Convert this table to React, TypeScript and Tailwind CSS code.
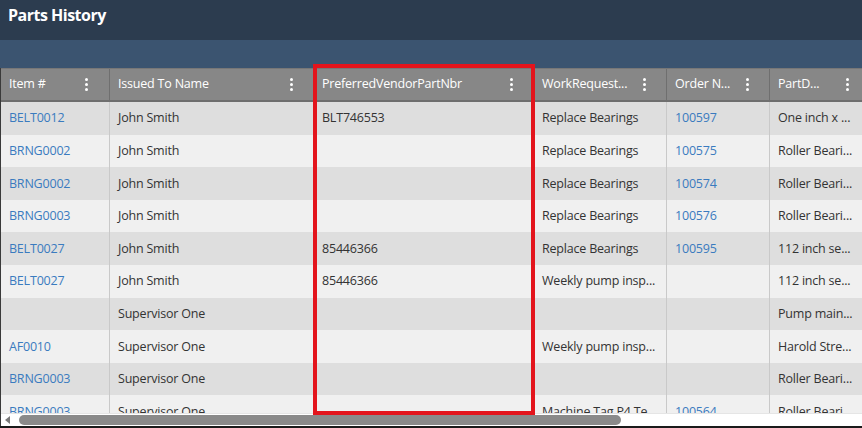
import React from 'react'

type Row = {
  item: string
  issuedTo: string
  vendorPart: string
  workRequest: string
  order: string
  partDesc: string
}

const rows: Row[] = [
  { item: 'BELT0012', issuedTo: 'John Smith', vendorPart: 'BLT746553', workRequest: 'Replace Bearings', order: '100597', partDesc: 'One inch x ...' },
  { item: 'BRNG0002', issuedTo: 'John Smith', vendorPart: '', workRequest: 'Replace Bearings', order: '100575', partDesc: 'Roller Beari...' },
  { item: 'BRNG0002', issuedTo: 'John Smith', vendorPart: '', workRequest: 'Replace Bearings', order: '100574', partDesc: 'Roller Beari...' },
  { item: 'BRNG0003', issuedTo: 'John Smith', vendorPart: '', workRequest: 'Replace Bearings', order: '100576', partDesc: 'Roller Beari...' },
  { item: 'BELT0027', issuedTo: 'John Smith', vendorPart: '85446366', workRequest: 'Replace Bearings', order: '100595', partDesc: '112 inch se...' },
  { item: 'BELT0027', issuedTo: 'John Smith', vendorPart: '85446366', workRequest: 'Weekly pump insp...', order: '', partDesc: '112 inch se...' },
  { item: '', issuedTo: 'Supervisor One', vendorPart: '', workRequest: '', order: '', partDesc: 'Pump main...' },
  { item: 'AF0010', issuedTo: 'Supervisor One', vendorPart: '', workRequest: 'Weekly pump insp...', order: '', partDesc: 'Harold Stre...' },
  { item: 'BRNG0003', issuedTo: 'Supervisor One', vendorPart: '', workRequest: '', order: '', partDesc: 'Roller Beari...' },
  { item: 'BRNG0003', issuedTo: 'Supervisor One', vendorPart: '', workRequest: 'Machine Tag P4 Te...', order: '100564', partDesc: 'Roller Beari...' },
]

// column widths in px, same for header and body
const cols = ['w-[109px]', 'w-[204px]', 'w-[220px]', 'w-[133px]', 'w-[103px]', 'w-[100px]']

const headers = ['Item #', 'Issued To Name', 'PreferredVendorPartNbr', 'WorkRequest...', 'Order N...', 'PartD...']

function Kebab({ first }: { first?: boolean }) {
  return (
    <span className={`flex flex-col gap-[2px] ${first ? 'mr-[21px]' : 'mr-[20px]'}`}>
      <span className="w-[3px] h-[3px] bg-white rounded-full" />
      <span className="w-[3px] h-[3px] bg-white rounded-full" />
      <span className="w-[3px] h-[3px] bg-white rounded-full" />
    </span>
  )
}

export default function App() {
  return (
    <div
      className="w-[862px] h-[428px] overflow-hidden bg-white flex flex-col relative"
      style={{ fontFamily: '"Open Sans", "Noto Sans", sans-serif' }}
    >
      {/* Title bar */}
      <div className="h-[40px] shrink-0 bg-[#2c3c4f] flex items-center px-[8px]">
        <h1 className="text-white text-[16px] font-bold tracking-[-0.5px] -mt-[10px]">Parts History</h1>
      </div>

      {/* Toolbar band */}
      <div className="h-[28px] shrink-0 bg-[#3b5470]" />

      {/* Grid */}
      <div className="flex-1 flex flex-col border-l border-[#3a3a3a] min-h-0">
        <div className="h-[34px] shrink-0 flex bg-[#878787] border-b-2 border-[#6e6e6e] border-t border-t-[#777]">
          {headers.map((h, i) => (
            <div
              key={h}
              className={`${cols[i]} shrink-0 flex items-center justify-between pl-[8px] border-r border-[#6f6f6f] text-white text-[12.5px] tracking-[-0.2px]`}
            >
              <span className="whitespace-nowrap">{h}</span>
              <Kebab first={i === 0} />
            </div>
          ))}
        </div>

        <div className="flex-1 min-h-0 overflow-hidden">
          {rows.map((r, idx) => {
            const cells = [r.item, r.issuedTo, r.vendorPart, r.workRequest, r.order, r.partDesc]
            return (
              <div
                key={idx}
                className={`h-[32.6px] flex ${idx % 2 === 0 ? 'bg-[#dedede]' : 'bg-[#f0f0f0]'}`}
              >
                {cells.map((c, i) => (
                  <div
                    key={i}
                    className={`${cols[i]} shrink-0 flex items-center pl-[8px] pt-[1px] border-r border-[#c9c9c9] text-[12.5px] tracking-[-0.2px] whitespace-nowrap ${
                      i === 0 || i === 4 ? 'text-[#3a7bbf]' : 'text-[#333]'
                    }`}
                  >
                    {c}
                  </div>
                ))}
              </div>
            )
          })}
        </div>

        {/* Horizontal scrollbar */}
        <div className="h-[13px] shrink-0 bg-white flex items-center border-t border-[#e5e5e5]">
          <svg width="16" height="12" viewBox="0 0 16 12" className="shrink-0">
            <path d="M9 2 L4 6 L9 10 Z" fill="#7a7a7a" />
          </svg>
          <div className="ml-[2px] w-[602px] h-[10px] rounded-full bg-[#8a8a8a]" />
        </div>
      </div>
      <div className="h-[2px] shrink-0 bg-[#1a1a1a]" />

      {/* Highlight box around PreferredVendorPartNbr column */}
      <div className="absolute left-[313px] top-[64px] w-[222px] h-[351px] border-[4px] border-[#e3141c] pointer-events-none" />
    </div>
  )
}
